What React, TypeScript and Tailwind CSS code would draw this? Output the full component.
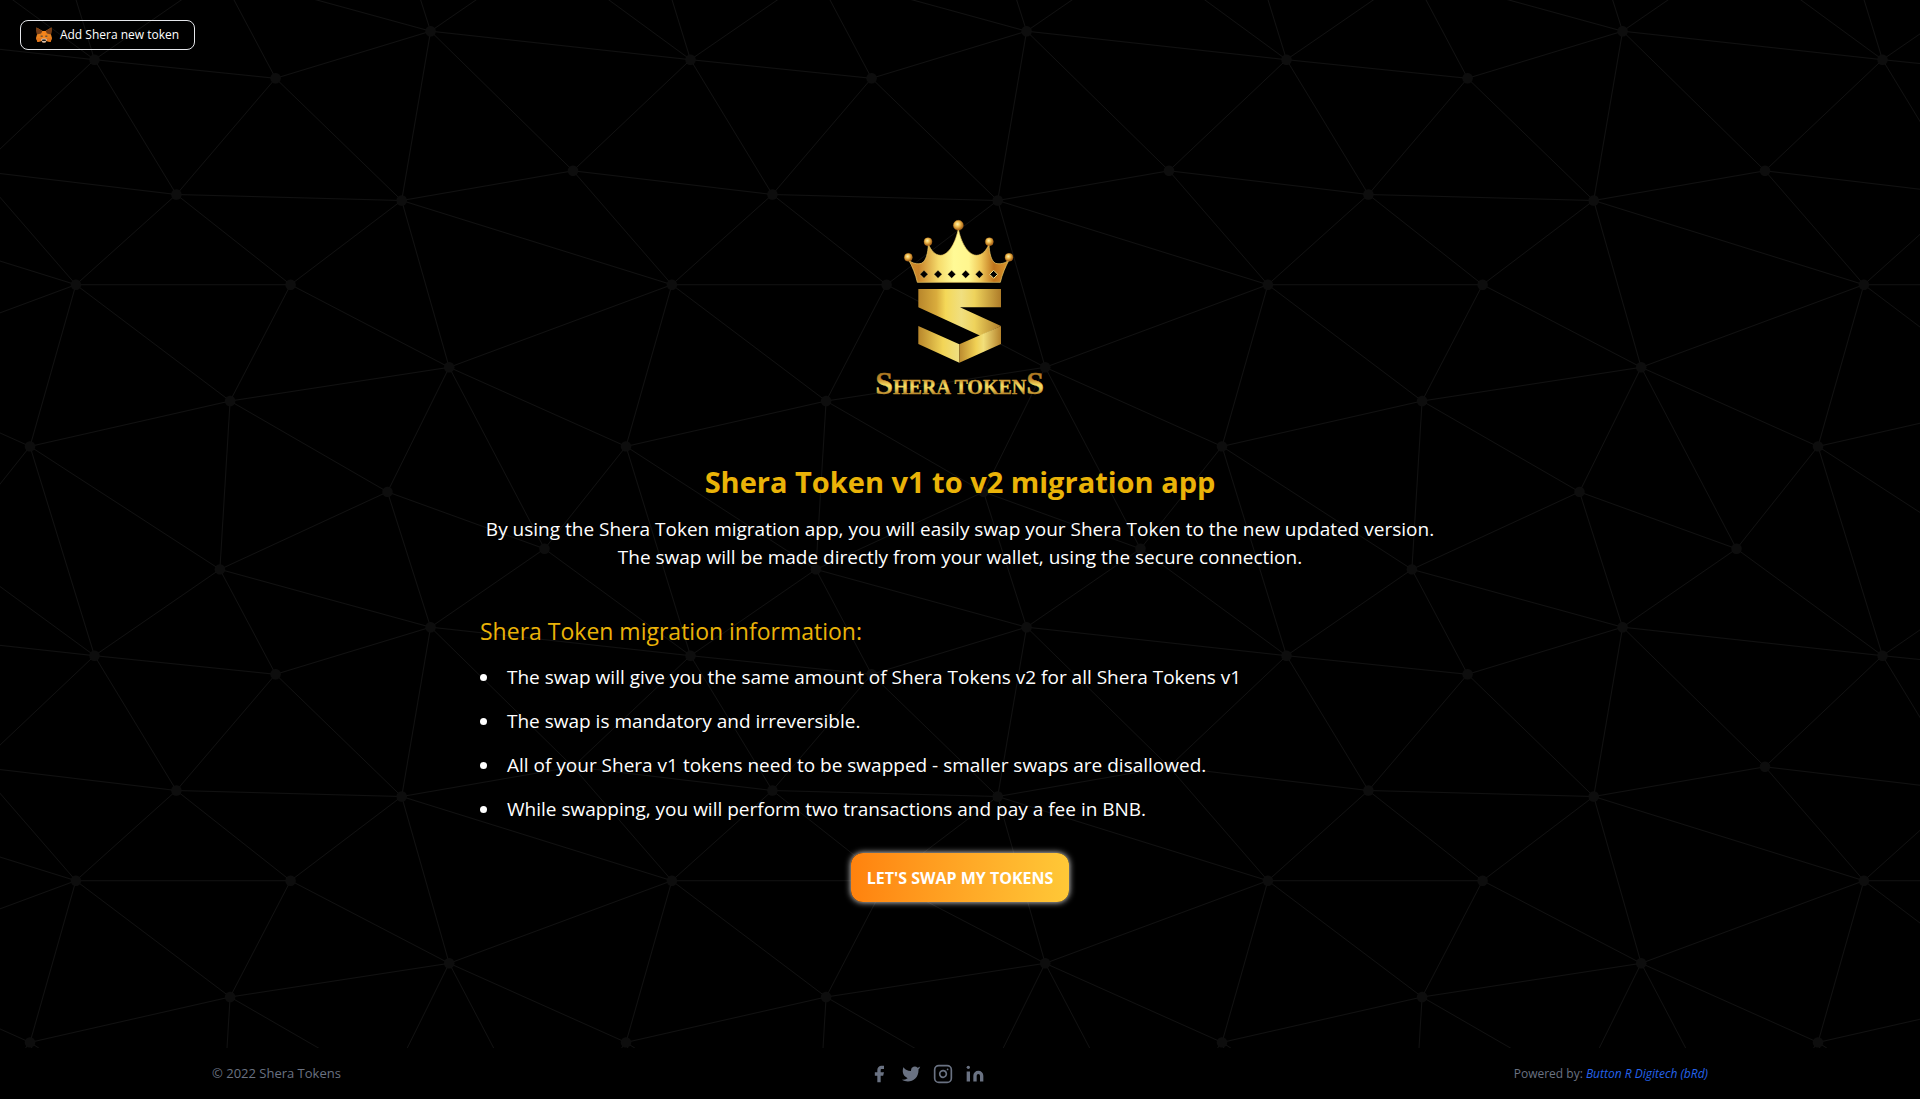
import React from "react";
import { Instagram } from "lucide-react";

const TILE = 596;

const nodes: Record<string, [number, number]> = {
  A: [94.5, 59.7],
  B: [275.6, 78.3],
  C: [430.6, 31.2],
  D: [573, 170.8],
  E: [176.4, 194.5],
  F: [401.7, 200.5],
  G: [75.9, 284.7],
  H: [290.6, 284.7],
  I: [449.2, 367.3],
  J: [230.1, 401],
  K: [30, 446.4],
  L: [387.5, 491.9],
  M: [544.5, 548.8],
  N: [219.9, 569.4],
};

// [from, to, tile offset x, tile offset y] of the far end
const edges: [string, string, number, number][] = [
  ["A", "B", 0, 0], ["A", "E", 0, 0], ["C", "A", 1, 0], ["N", "A", 0, 1],
  ["K", "A", 0, 1], ["M", "A", 1, 1], ["D", "A", 1, 0], ["B", "C", 0, 0],
  ["B", "E", 0, 0], ["B", "F", 0, 0], ["N", "B", 0, 1], ["C", "F", 0, 0],
  ["C", "D", 0, 0], ["N", "C", 0, 1], ["L", "C", 0, 1], ["M", "C", 0, 1],
  ["D", "F", 0, 0], ["D", "E", 1, 0], ["D", "G", 1, 0], ["E", "F", 0, 0],
  ["E", "G", 0, 0], ["E", "H", 0, 0], ["F", "H", 0, 0], ["F", "I", 0, 0],
  ["F", "G", 1, 0], ["G", "H", 0, 0], ["G", "J", 0, 0], ["G", "K", 0, 0],
  ["I", "G", 1, 0], ["H", "J", 0, 0], ["H", "I", 0, 0], ["I", "J", 0, 0],
  ["I", "L", 0, 0], ["I", "M", 0, 0], ["I", "K", 1, 0], ["J", "K", 0, 0],
  ["J", "L", 0, 0], ["J", "N", 0, 0], ["K", "N", 0, 0], ["M", "K", 1, 0],
  ["L", "N", 0, 0], ["L", "M", 0, 0],
];

const offsets = [-TILE, 0, TILE];

function Constellation() {
  return (
    <svg className="absolute inset-0 h-full w-full" aria-hidden="true">
      <defs>
        <g id="mesh">
          {edges.map(([a, b, ox, oy]) => (
            <line
              key={a + b}
              x1={nodes[a][0]}
              y1={nodes[a][1]}
              x2={nodes[b][0] + ox * TILE}
              y2={nodes[b][1] + oy * TILE}
              stroke="#111111"
            />
          ))}
          {Object.entries(nodes).map(([k, [x, y]]) => (
            <circle key={k} cx={x} cy={y} r="5.2" fill="#0d0d0d" />
          ))}
        </g>
        <pattern id="stars" width={TILE} height={TILE} patternUnits="userSpaceOnUse">
          {offsets.map((x) => offsets.map((y) => <use key={`${x},${y}`} href="#mesh" x={x} y={y} />))}
        </pattern>
      </defs>
      <rect width="100%" height="100%" fill="url(#stars)" />
    </svg>
  );
}

function Logo() {
  const balls = [[145, 142, 12], [204, 95, 12], [295, 46, 15], [388, 95, 12], [447, 142, 12]];
  const gems = [192, 234, 275, 317, 358, 401];
  return (
    <svg viewBox="0 0 600 600" className="size-[200px]" role="img" aria-label="Shera Tokens">
      <defs>
        <linearGradient id="crown">
          <stop offset="0" stopColor="#d08c2c" />
          <stop offset="0.1" stopColor="#c8842a" />
          <stop offset="0.3" stopColor="#f6dc6c" />
          <stop offset="0.45" stopColor="#fffa96" />
          <stop offset="0.6" stopColor="#fff68e" />
          <stop offset="0.72" stopColor="#f0c95a" />
          <stop offset="0.85" stopColor="#bf741c" />
          <stop offset="1" stopColor="#d9972f" />
        </linearGradient>
        <linearGradient id="ribbon" gradientUnits="userSpaceOnUse" x1="175" y1="0" x2="423" y2="0">
          <stop offset="0" stopColor="#b8862b" />
          <stop offset="0.22" stopColor="#d9ac3d" />
          <stop offset="0.33" stopColor="#f4d858" />
          <stop offset="0.52" stopColor="#f0df80" />
          <stop offset="0.68" stopColor="#eed35c" />
          <stop offset="1" stopColor="#ae7c29" />
        </linearGradient>
        <linearGradient id="leftFold">
          <stop offset="0" stopColor="#b8862b" />
          <stop offset="0.6" stopColor="#f2d557" />
          <stop offset="1" stopColor="#efdf82" />
        </linearGradient>
        <linearGradient id="rightFold">
          <stop offset="0" stopColor="#bb8a2e" />
          <stop offset="0.4" stopColor="#f0d054" />
          <stop offset="0.58" stopColor="#f2df7a" />
          <stop offset="1" stopColor="#b4822b" />
        </linearGradient>
        <radialGradient id="ball" cx="0.42" cy="0.38" r="0.6">
          <stop offset="0" stopColor="#fff3b0" />
          <stop offset="0.45" stopColor="#eebb4d" />
          <stop offset="1" stopColor="#a85f16" />
        </radialGradient>
        <linearGradient id="word" gradientUnits="userSpaceOnUse" x1="0" y1="488" x2="0" y2="556">
          <stop offset="0" stopColor="#a8741f" />
          <stop offset="0.3" stopColor="#c48c2c" />
          <stop offset="0.55" stopColor="#f5dc63" />
          <stop offset="0.7" stopColor="#efd05a" />
          <stop offset="1" stopColor="#a8741f" />
        </linearGradient>
      </defs>
      <path
        d="M146 150C158 161 172 163 184 160C198 154 204 130 205 102C213 122 226 136 242 136C268 134 288 94 295 56C302 94 322 134 349 136C366 136 379 122 387 102C388 130 394 154 407 160C420 163 434 161 447 150C437 169 426 194 421 217H172C167 194 157 169 146 150Z"
        fill="url(#crown)"
        stroke="#f3d26a"
        strokeWidth="2"
      />
      {gems.map((x) => (
        <path key={x} d={`M${x} 181L${x + 12} 193L${x} 205L${x - 12} 193Z`} fill="#000" stroke="#f8e58a" strokeWidth={x === 401 ? 3 : 1} />
      ))}
      {balls.map(([x, y, r]) => (
        <circle key={x} cx={x} cy={y} r={r} fill="url(#ball)" stroke="#c9852c" />
      ))}
      <path d="M175 237H423V292H300L423 348L361 377L175 292Z" fill="url(#ribbon)" />
      <path d="M175 348L298 403V458L175 402Z" fill="url(#leftFold)" />
      <path d="M298 403L423 348V402L298 458Z" fill="url(#rightFold)" />
      <text
        x="299"
        y="553"
        textAnchor="middle"
        fill="url(#word)"
        stroke="url(#word)"
        className="font-['Liberation_Serif',serif] text-[60px] font-bold"
      >
        <tspan className="text-[96px]">S</tspan>HERA TOKEN<tspan className="text-[96px]">S</tspan>
      </text>
    </svg>
  );
}

function Fox() {
  return (
    <svg viewBox="0 0 32 32" className="size-4" aria-hidden="true">
      <path d="M1 1L13 8H19L31 1L30 15L32 22L29 30L21 28L18 31H14L11 28L3 30L0 22L2 15Z" fill="#e8821e" />
      <path d="M1 1L13 8L10 13L2 15L0 7ZM31 1L19 8L22 13L30 15L32 7Z" fill="#763d16" />
      <path d="M13 8H19L20 22H12Z" fill="#f6851b" />
      <path d="M8 18L13 17L13 20ZM24 18L19 17L19 20Z" fill="#233447" />
      <path d="M0 22H10L11 28L3 30ZM32 22H22L21 28L29 30Z" fill="#e4761b" />
      <path d="M10 25L13 23H19L22 25L19 31H13Z" fill="#d7c1b3" />
      <path d="M13 25H19L20 28H12Z" fill="#161616" />
    </svg>
  );
}

const points = [
  "The swap will give you the same amount of Shera Tokens v2 for all Shera Tokens v1",
  "The swap is mandatory and irreversible.",
  "All of your Shera v1 tokens need to be swapped - smaller swaps are disallowed.",
  "While swapping, you will perform two transactions and pay a fee in BNB.",
];

export default function App() {
  return (
    <div className="flex min-h-screen flex-col bg-black font-['Open_Sans',sans-serif] text-white">
      <main className="relative flex flex-1 flex-col">
        <Constellation />
        <div className="relative p-5">
          <button className="flex h-[30px] w-[175px] items-center justify-center gap-2 rounded-lg border border-gray-200 text-xs">
            <Fox />
            Add Shera new token
          </button>
        </div>
        <div className="relative flex flex-col items-center pt-[140px]">
          <Logo />
          <h1 className="mt-[54px] text-[29px] leading-9 font-bold text-[#eab308]">Shera Token v1 to v2 migration app</h1>
          <p className="mt-[15px] text-center text-[19px] leading-7">
            By using the Shera Token migration app, you will easily swap your Shera Token to the new updated version.
            <br />
            The swap will be made directly from your wallet, using the secure connection.
          </p>
          <section className="mt-11 w-1/2">
            <h2 className="text-[23px] leading-8 text-[#eab308]">Shera Token migration information:</h2>
            <ul className="mt-4 list-inside list-disc space-y-4 text-[19px] leading-7">
              {points.map((p) => (
                <li key={p}>{p}</li>
              ))}
            </ul>
          </section>
          <button className="mt-[30px] h-[49px] rounded-xl bg-linear-to-r from-[#ff820d] to-[#ffc837] px-4 text-base font-bold shadow-[0_0_6px_#eeeeee]">
            LET'S SWAP MY TOKENS
          </button>
        </div>
      </main>
      <footer className="bg-black text-gray-500">
        <div className="mx-auto flex h-[51px] max-w-[1536px] items-center justify-between px-5">
          <p className="text-[13px]">© 2022 Shera Tokens</p>
          <nav className="flex items-center gap-3">
            <a href="#facebook" aria-label="Facebook">
              <svg viewBox="0 0 24 24" fill="currentColor" className="size-5"><path d="M18 2h-3a5 5 0 00-5 5v3H7v4h3v8h4v-8h3l1-4h-4V7a1 1 0 011-1h3z" /></svg>
            </a>
            <a href="#twitter" aria-label="Twitter">
              <svg viewBox="0 0 24 24" fill="currentColor" className="size-5"><path d="M23 3a10.9 10.9 0 01-3.14 1.53 4.48 4.48 0 00-7.86 3v1A10.66 10.66 0 013 4s-4 9 5 13a11.64 11.64 0 01-7 2c9 5 20 0 20-11.5a4.5 4.5 0 00-.08-.83A7.72 7.72 0 0023 3z" /></svg>
            </a>
            <a href="#instagram" aria-label="Instagram">
              <Instagram className="size-5" />
            </a>
            <a href="#linkedin" aria-label="LinkedIn">
              <svg viewBox="0 0 24 24" fill="currentColor" className="size-5"><path d="M16 8a6 6 0 016 6v7h-4v-7a2 2 0 00-2-2 2 2 0 00-2 2v7h-4v-7a6 6 0 016-6zM2 9h4v12H2z" /><circle cx="4" cy="4" r="2" /></svg>
            </a>
          </nav>
          <p className="text-xs">
            Powered by: <a href="#brd" className="text-[#2563eb] italic">Button R Digitech (bRd)</a>
          </p>
        </div>
      </footer>
    </div>
  );
}
